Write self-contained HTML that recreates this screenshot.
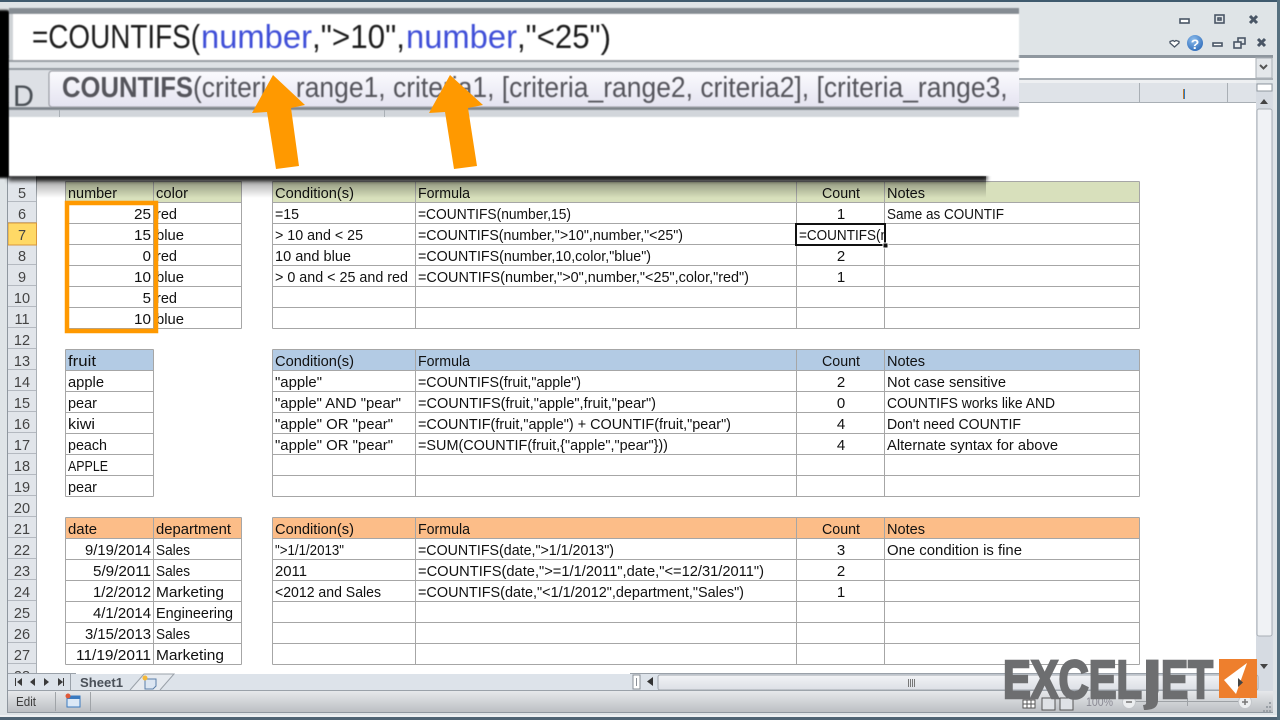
<!DOCTYPE html>
<html><head><meta charset="utf-8"><style>
html,body{margin:0;padding:0;background:#dfe4e7;width:1280px;height:720px;overflow:hidden}
svg{display:block}
text{font-family:"Liberation Sans",sans-serif;font-size:15px;fill:#111;white-space:pre}
.r{text-anchor:end}.c{text-anchor:middle}
.rh{text-anchor:middle;fill:#444;font-size:14.5px}
.z{font-size:33px;fill:#1e1e1e}
.zb{font-size:33px;fill:#3f4fd8}
.tip{font-size:29px;fill:#55555c}
.lg{font-size:54px;font-weight:bold;fill:#6d6e70;stroke:#6d6e70;stroke-width:2.500}
</style></head><body>
<svg width="1280" height="720" viewBox="0 0 1280 720" xmlns="http://www.w3.org/2000/svg">
<defs>
<linearGradient id="st" x1="0" y1="0" x2="0" y2="1"><stop offset="0" stop-color="#e6e8eb"/><stop offset="1" stop-color="#bcbfc3"/></linearGradient>
<linearGradient id="sc" x1="0" y1="0" x2="0" y2="1"><stop offset="0" stop-color="#f2f3f6"/><stop offset="1" stop-color="#dcdfe5"/></linearGradient>
<linearGradient id="tp" x1="0" y1="0" x2="0" y2="1"><stop offset="0" stop-color="#fbfbfe"/><stop offset="1" stop-color="#e4e3f0"/></linearGradient>
<linearGradient id="ps" x1="0" y1="0" x2="0" y2="1"><stop offset="0" stop-color="#000" stop-opacity=".7"/><stop offset=".3" stop-color="#000" stop-opacity=".3"/><stop offset="1" stop-color="#000" stop-opacity="0"/></linearGradient>
<radialGradient id="q" cx=".4" cy=".3" r=".8"><stop offset="0" stop-color="#8cbcec"/><stop offset="1" stop-color="#2a68b8"/></radialGradient>
<filter id="b"><feGaussianBlur stdDeviation=".55"/></filter>
<filter id="bs" x="-20%" y="-200%" width="140%" height="500%"><feGaussianBlur stdDeviation="2"/></filter>
<filter id="bl" x="-100%" y="-5%" width="300%" height="110%"><feGaussianBlur stdDeviation="1"/></filter>
<clipPath id="jc"><rect x="1146" y="650" width="12.500" height="50"/></clipPath>
</defs>

<!-- window -->
<rect width="1280" height="720" fill="#dfe4e7"/>
<rect x="0" y="0" width="1280" height="2" fill="#3f5a6e"/>
<rect x="0" y="717" width="1280" height="3" fill="#4f6474"/>
<rect x="0" y="715" width="1280" height="2" fill="#eef0f2"/>
<rect x="1277" y="0" width="3" height="720" fill="#56707f"/>

<!-- window controls -->
<g fill="none" stroke="#4a5666" stroke-width="1.6">
<rect x="1180" y="19" width="9" height="4" fill="#fff"/>
<rect x="1215" y="15" width="9" height="8"/><rect x="1218" y="18" width="3" height="2"/>
<path d="M1250 16l7 7m0-7l-7 7" stroke-width="3"/>
<rect x="1213" y="43" width="9" height="3" fill="#fff"/>
<rect x="1238" y="38" width="7" height="6"/><rect x="1234" y="42" width="7" height="6" fill="#e6e9ec"/>
<path d="M1258 39l7 7m0-7l-7 7" stroke-width="3"/>
<path d="M1170 41.500l3 -1 l1.500 1 l1.500-1 l3 1 v1.500 l-4.500 4 l-4.500-4z" stroke-width="1.300" fill="#fff"/>
</g>
<circle cx="1195" cy="43" r="8" fill="url(#q)"/>
<text x="1195" y="49" class="c" style="font-size:14px;font-weight:bold;fill:#fff">?</text>

<!-- formula bar -->
<rect x="8" y="55" width="1265" height="3" fill="#8f979f"/>
<rect x="8" y="58" width="1248" height="20" fill="#fff"/>
<rect x="1256" y="58" width="16" height="20" fill="#e4e7ea" stroke="#a9afb5"/>
<path d="M1260 65l3.500 3.500 3.500-3.500" fill="none" stroke="#555" stroke-width="2"/>
<rect x="8" y="78" width="1265" height="2" fill="#a9afb5"/>
<rect x="8" y="80" width="1248" height="3" fill="#eef0f2"/>

<!-- column headers -->
<rect x="8" y="83" width="1248" height="20" fill="#dfe3e8"/>
<path d="M8 102.500H1256M1139.500 83V103M1227.500 83V103" stroke="#a9afb5"/>
<rect x="1183" y="89" width="1" height="10" fill="#c47a2c"/><rect x="1184" y="89" width="1" height="10" fill="#2a7ac8"/>

<!-- sheet -->
<rect x="36" y="103" width="1220" height="571" fill="#fff"/>

<!-- vertical scrollbar -->
<rect x="1256" y="83" width="17" height="608" fill="#d6dbe2"/>
<rect x="1257" y="84" width="15" height="7" fill="#fff" stroke="#8f979f"/>
<path d="M1260 104h8l-4-5z" fill="#444"/>
<rect x="1257" y="109" width="15" height="527" rx="2" fill="#f0f2f5" stroke="#a9afb5"/>
<path d="M1260 664h8l-4 5z" fill="#444"/>

<!-- row header -->
<rect x="8" y="103" width="28" height="571" fill="#e1e5ea"/>
<path d="M36.500 103V674" stroke="#a9afb5"/>
<path d="M8 201.500H36M8 222.500H36M8 243.500H36M8 264.500H36M8 285.500H36M8 306.500H36M8 327.500H36M8 348.500H36M8 369.500H36M8 390.500H36M8 411.500H36M8 432.500H36M8 453.500H36M8 474.500H36M8 495.500H36M8 516.500H36M8 537.500H36M8 558.500H36M8 579.500H36M8 600.500H36M8 621.500H36M8 642.500H36M8 663.500H36" stroke="#b4b9c0"/>
<rect x="8" y="223" width="28.500" height="22" fill="#ffd966" stroke="#d8963c"/>
<rect x="0" y="2" width="8" height="713" fill="#dfe4e7"/>
<rect x="7" y="103" width="1" height="610" fill="#8f979f"/>

<g>
<text x="22" y="198" class="rh">5</text><text x="22" y="219" class="rh">6</text><text x="22" y="240" class="rh">7</text><text x="22" y="261" class="rh">8</text><text x="22" y="282" class="rh">9</text><text x="22" y="303" class="rh">10</text><text x="22" y="324" class="rh">11</text><text x="22" y="345" class="rh">12</text><text x="22" y="366" class="rh">13</text><text x="22" y="387" class="rh">14</text><text x="22" y="408" class="rh">15</text><text x="22" y="429" class="rh">16</text><text x="22" y="450" class="rh">17</text><text x="22" y="471" class="rh">18</text><text x="22" y="492" class="rh">19</text><text x="22" y="513" class="rh">20</text><text x="22" y="534" class="rh">21</text><text x="22" y="555" class="rh">22</text><text x="22" y="576" class="rh">23</text><text x="22" y="597" class="rh">24</text><text x="22" y="618" class="rh">25</text><text x="22" y="639" class="rh">26</text><text x="22" y="660" class="rh">27</text>
</g>
<svg x="8" y="664" width="28" height="10"><text x="14" y="17" class="rh">28</text></svg>

<!-- header fills -->
<g fill="#d8e0bc"><rect x="66" y="182" width="175" height="20"/><rect x="273" y="182" width="866" height="20"/></g>
<g fill="#b3cbe4"><rect x="66" y="350" width="87" height="20"/><rect x="273" y="350" width="866" height="20"/></g>
<g fill="#fcbd88"><rect x="66" y="518" width="175" height="20"/><rect x="273" y="518" width="866" height="20"/></g>

<!-- grid -->
<g stroke="#a6a6a6" fill="none">
<path d="M65.500 181.500H241.500M65.500 202.500H241.500M65.500 223.500H241.500M65.500 244.500H241.500M65.500 265.500H241.500M65.500 286.500H241.500M65.500 307.500H241.500M65.500 328.500H241.500M65.500 181.500V328.500M153.500 181.500V328.500M241.500 181.500V328.500"/>
<path d="M272.500 181.500H1139.500M272.500 202.500H1139.500M272.500 223.500H1139.500M272.500 244.500H1139.500M272.500 265.500H1139.500M272.500 286.500H1139.500M272.500 307.500H1139.500M272.500 328.500H1139.500M272.500 181.500V328.500M415.500 181.500V328.500M796.500 181.500V328.500M884.500 181.500V328.500M1139.500 181.500V328.500"/>
<path d="M65.500 349.500H153.500M65.500 370.500H153.500M65.500 391.500H153.500M65.500 412.500H153.500M65.500 433.500H153.500M65.500 454.500H153.500M65.500 475.500H153.500M65.500 496.500H153.500M65.500 349.500V496.500M153.500 349.500V496.500"/>
<path d="M272.500 349.500H1139.500M272.500 370.500H1139.500M272.500 391.500H1139.500M272.500 412.500H1139.500M272.500 433.500H1139.500M272.500 454.500H1139.500M272.500 475.500H1139.500M272.500 496.500H1139.500M272.500 349.500V496.500M415.500 349.500V496.500M796.500 349.500V496.500M884.500 349.500V496.500M1139.500 349.500V496.500"/>
<path d="M65.500 517.500H241.500M65.500 538.500H241.500M65.500 559.500H241.500M65.500 580.500H241.500M65.500 601.500H241.500M65.500 622.500H241.500M65.500 643.500H241.500M65.500 664.500H241.500M65.500 517.500V664.500M153.500 517.500V664.500M241.500 517.500V664.500"/>
<path d="M272.500 517.500H1139.500M272.500 538.500H1139.500M272.500 559.500H1139.500M272.500 580.500H1139.500M272.500 601.500H1139.500M272.500 622.500H1139.500M272.500 643.500H1139.500M272.500 664.500H1139.500M272.500 517.500V664.500M415.500 517.500V664.500M796.500 517.500V664.500M884.500 517.500V664.500M1139.500 517.500V664.500"/>
</g>

<!-- text -->
<g>
<text x="68" y="198" textLength="49" lengthAdjust="spacingAndGlyphs">number</text>
<text x="156" y="198" textLength="32" lengthAdjust="spacingAndGlyphs">color</text>
<text x="275" y="198" textLength="79" lengthAdjust="spacingAndGlyphs">Condition(s)</text>
<text x="418" y="198" textLength="52" lengthAdjust="spacingAndGlyphs">Formula</text>
<text x="841" y="198" class="c" textLength="38" lengthAdjust="spacingAndGlyphs">Count</text>
<text x="887" y="198" textLength="38" lengthAdjust="spacingAndGlyphs">Notes</text>

<text x="151" y="219" class="r" textLength="17" lengthAdjust="spacingAndGlyphs">25</text>
<text x="156" y="219" textLength="21" lengthAdjust="spacingAndGlyphs">red</text>
<text x="275" y="219" textLength="24" lengthAdjust="spacingAndGlyphs">=15</text>
<text x="418" y="219" textLength="153" lengthAdjust="spacingAndGlyphs">=COUNTIFS(number,15)</text>
<text x="841" y="219" class="c">1</text>
<text x="887" y="219" textLength="117" lengthAdjust="spacingAndGlyphs">Same as COUNTIF</text>

<text x="151" y="240" class="r" textLength="17" lengthAdjust="spacingAndGlyphs">15</text>
<text x="156" y="240" textLength="28" lengthAdjust="spacingAndGlyphs">blue</text>
<text x="275" y="240" textLength="88" lengthAdjust="spacingAndGlyphs">&gt; 10 and &lt; 25</text>
<text x="418" y="240" textLength="265" lengthAdjust="spacingAndGlyphs">=COUNTIFS(number,"&gt;10",number,"&lt;25")</text>

<text x="151" y="261" class="r">0</text>
<text x="156" y="261" textLength="21" lengthAdjust="spacingAndGlyphs">red</text>
<text x="275" y="261" textLength="76" lengthAdjust="spacingAndGlyphs">10 and blue</text>
<text x="418" y="261" textLength="233" lengthAdjust="spacingAndGlyphs">=COUNTIFS(number,10,color,"blue")</text>
<text x="841" y="261" class="c">2</text>

<text x="151" y="282" class="r" textLength="17" lengthAdjust="spacingAndGlyphs">10</text>
<text x="156" y="282" textLength="28" lengthAdjust="spacingAndGlyphs">blue</text>
<text x="275" y="282" textLength="133" lengthAdjust="spacingAndGlyphs">&gt; 0 and &lt; 25 and red</text>
<text x="418" y="282" textLength="331" lengthAdjust="spacingAndGlyphs">=COUNTIFS(number,"&gt;0",number,"&lt;25",color,"red")</text>
<text x="841" y="282" class="c">1</text>

<text x="151" y="303" class="r">5</text>
<text x="156" y="303" textLength="21" lengthAdjust="spacingAndGlyphs">red</text>
<text x="151" y="324" class="r" textLength="17" lengthAdjust="spacingAndGlyphs">10</text>
<text x="156" y="324" textLength="28" lengthAdjust="spacingAndGlyphs">blue</text>

<text x="68" y="366" textLength="28" lengthAdjust="spacingAndGlyphs">fruit</text>
<text x="275" y="366" textLength="79" lengthAdjust="spacingAndGlyphs">Condition(s)</text>
<text x="418" y="366" textLength="52" lengthAdjust="spacingAndGlyphs">Formula</text>
<text x="841" y="366" class="c" textLength="38" lengthAdjust="spacingAndGlyphs">Count</text>
<text x="887" y="366" textLength="38" lengthAdjust="spacingAndGlyphs">Notes</text>

<text x="68" y="387" textLength="36" lengthAdjust="spacingAndGlyphs">apple</text>
<text x="275" y="387" textLength="47" lengthAdjust="spacingAndGlyphs">"apple"</text>
<text x="418" y="387" textLength="163" lengthAdjust="spacingAndGlyphs">=COUNTIFS(fruit,"apple")</text>
<text x="841" y="387" class="c">2</text>
<text x="887" y="387" textLength="119" lengthAdjust="spacingAndGlyphs">Not case sensitive</text>

<text x="68" y="408" textLength="29" lengthAdjust="spacingAndGlyphs">pear</text>
<text x="275" y="408" textLength="126" lengthAdjust="spacingAndGlyphs">"apple" AND "pear"</text>
<text x="418" y="408" textLength="238" lengthAdjust="spacingAndGlyphs">=COUNTIFS(fruit,"apple",fruit,"pear")</text>
<text x="841" y="408" class="c">0</text>
<text x="887" y="408" textLength="168" lengthAdjust="spacingAndGlyphs">COUNTIFS works like AND</text>

<text x="68" y="429" textLength="27" lengthAdjust="spacingAndGlyphs">kiwi</text>
<text x="275" y="429" textLength="118" lengthAdjust="spacingAndGlyphs">"apple" OR "pear"</text>
<text x="418" y="429" textLength="313" lengthAdjust="spacingAndGlyphs">=COUNTIF(fruit,"apple") + COUNTIF(fruit,"pear")</text>
<text x="841" y="429" class="c">4</text>
<text x="887" y="429" textLength="134" lengthAdjust="spacingAndGlyphs">Don't need COUNTIF</text>

<text x="68" y="450" textLength="39" lengthAdjust="spacingAndGlyphs">peach</text>
<text x="275" y="450" textLength="118" lengthAdjust="spacingAndGlyphs">"apple" OR "pear"</text>
<text x="418" y="450" textLength="250" lengthAdjust="spacingAndGlyphs">=SUM(COUNTIF(fruit,{"apple","pear"}))</text>
<text x="841" y="450" class="c">4</text>
<text x="887" y="450" textLength="171" lengthAdjust="spacingAndGlyphs">Alternate syntax for above</text>

<text x="68" y="471" textLength="40" lengthAdjust="spacingAndGlyphs">APPLE</text>
<text x="68" y="492" textLength="29" lengthAdjust="spacingAndGlyphs">pear</text>

<text x="68" y="534" textLength="29" lengthAdjust="spacingAndGlyphs">date</text>
<text x="156" y="534" textLength="75" lengthAdjust="spacingAndGlyphs">department</text>
<text x="275" y="534" textLength="79" lengthAdjust="spacingAndGlyphs">Condition(s)</text>
<text x="418" y="534" textLength="52" lengthAdjust="spacingAndGlyphs">Formula</text>
<text x="841" y="534" class="c" textLength="38" lengthAdjust="spacingAndGlyphs">Count</text>
<text x="887" y="534" textLength="38" lengthAdjust="spacingAndGlyphs">Notes</text>

<text x="151" y="555" class="r" textLength="66" lengthAdjust="spacingAndGlyphs">9/19/2014</text>
<text x="156" y="555" textLength="34" lengthAdjust="spacingAndGlyphs">Sales</text>
<text x="275" y="555" textLength="69" lengthAdjust="spacingAndGlyphs">"&gt;1/1/2013"</text>
<text x="418" y="555" textLength="196" lengthAdjust="spacingAndGlyphs">=COUNTIFS(date,"&gt;1/1/2013")</text>
<text x="841" y="555" class="c">3</text>
<text x="887" y="555" textLength="135" lengthAdjust="spacingAndGlyphs">One condition is fine</text>

<text x="151" y="576" class="r" textLength="58" lengthAdjust="spacingAndGlyphs">5/9/2011</text>
<text x="156" y="576" textLength="34" lengthAdjust="spacingAndGlyphs">Sales</text>
<text x="275" y="576" textLength="32" lengthAdjust="spacingAndGlyphs">2011</text>
<text x="418" y="576" textLength="346" lengthAdjust="spacingAndGlyphs">=COUNTIFS(date,"&gt;=1/1/2011",date,"&lt;=12/31/2011")</text>
<text x="841" y="576" class="c">2</text>

<text x="151" y="597" class="r" textLength="58" lengthAdjust="spacingAndGlyphs">1/2/2012</text>
<text x="156" y="597" textLength="68" lengthAdjust="spacingAndGlyphs">Marketing</text>
<text x="275" y="597" textLength="106" lengthAdjust="spacingAndGlyphs">&lt;2012 and Sales</text>
<text x="418" y="597" textLength="326" lengthAdjust="spacingAndGlyphs">=COUNTIFS(date,"&lt;1/1/2012",department,"Sales")</text>
<text x="841" y="597" class="c">1</text>

<text x="151" y="618" class="r" textLength="58" lengthAdjust="spacingAndGlyphs">4/1/2014</text>
<text x="156" y="618" textLength="77" lengthAdjust="spacingAndGlyphs">Engineering</text>
<text x="151" y="639" class="r" textLength="66" lengthAdjust="spacingAndGlyphs">3/15/2013</text>
<text x="156" y="639" textLength="34" lengthAdjust="spacingAndGlyphs">Sales</text>
<text x="151" y="660" class="r" textLength="75" lengthAdjust="spacingAndGlyphs">11/19/2011</text>
<text x="156" y="660" textLength="68" lengthAdjust="spacingAndGlyphs">Marketing</text>
</g>

<!-- active cell -->
<svg x="797" y="225" width="87" height="20"><text x="2" y="15" textLength="89" lengthAdjust="spacingAndGlyphs">=COUNTIFS(n</text></svg>
<rect x="796" y="224" width="89" height="21" fill="none" stroke="#111" stroke-width="2"/>
<rect x="883" y="243" width="5" height="5" fill="#111" stroke="#fff"/>

<!-- orange highlight -->
<rect x="67" y="203" width="89" height="128" fill="none" stroke="#ff9900" stroke-width="4.500"/>

<!-- sheet tabs -->
<rect x="8" y="674" width="1249" height="17" fill="#dde3ea"/>
<path d="M8 673.500H76M630 673.500H1257M8 690.500H1257" stroke="#9aa1a9"/>
<path d="M70.500 674V690" stroke="#9aa1a9"/>
<g fill="#3a3a3a">
<path d="M15 678h1v8h-1zM22 678v8l-5-4z"/><path d="M35 678v8l-5-4z"/><path d="M44 678v8l5-4z"/><path d="M58 678v8l5-4zM63 678h1v8h-1z"/>
</g>
<text x="80" y="687" style="font-weight:bold;font-size:13px;fill:#4a5058" textLength="43" lengthAdjust="spacingAndGlyphs">Sheet1</text>
<path d="M130 690l14-16h30l-14 16" fill="#e6eaef" stroke="#9aa1a9"/>
<path d="M145 679h11v7l-3 3h-8z" fill="#dce6f2" stroke="#5a7ea8"/>
<circle cx="145" cy="678" r="2.500" fill="#f5b93a"/>

<!-- hscroll -->
<rect x="633" y="675" width="7" height="14" fill="#fff" stroke="#8a9098"/>
<rect x="636" y="678" width="1" height="8" fill="#8a9098"/>
<path d="M653 677v9l-6-4.500z" fill="#333"/>
<rect x="658" y="675" width="600" height="15" rx="2" fill="url(#sc)" stroke="#a0a6ad"/>
<path d="M908.500 679v8M910.500 679v8M912.500 679v8M914.500 679v8" stroke="#777"/>

<!-- status bar -->
<rect x="8" y="691" width="1265" height="21" fill="url(#st)"/>
<rect x="8" y="712" width="1265" height="1" fill="#8f979f"/>
<path d="M55.500 692V711M90.500 692V711" stroke="#a0a4a8"/>
<text x="16" y="706" style="font-size:12.500px;fill:#3c3c3c" textLength="20" lengthAdjust="spacingAndGlyphs">Edit</text>
<rect x="67" y="696" width="13" height="11" fill="#dbe8f6" stroke="#3a7ac0"/>
<rect x="67" y="696" width="13" height="3" fill="#3a7ac0"/>
<circle cx="68" cy="696" r="2.500" fill="#e05a3a"/>
<path d="M1023 700h12v8h-12zM1023 704h12M1027 700v8M1031 700v8" fill="#fff" stroke="#555"/>
<rect x="1042" y="698" width="13" height="12" fill="#dfe2e6" stroke="#555"/>
<rect x="1060" y="698" width="13" height="12" fill="#dfe2e6" stroke="#555"/>
<text x="1086" y="706" style="font-size:12px;fill:#8a8a94" textLength="27" lengthAdjust="spacingAndGlyphs">100%</text>
<circle cx="1129" cy="702" r="6.500" fill="#eceef0" stroke="#c4c7cb"/>
<path d="M1126 702h6" stroke="#777" stroke-width="1.500"/>
<path d="M1136 701.500h103M1187.500 698v8" stroke="#9ea2a6"/>
<circle cx="1245" cy="702" r="6.500" fill="#eceef0" stroke="#c4c7cb"/>
<path d="M1242 702h6M1245 699v6" stroke="#777" stroke-width="1.500"/>
<g fill="#9aa0a6"><rect x="1269" y="702" width="2" height="2"/><rect x="1266" y="706" width="2" height="2"/><rect x="1269" y="706" width="2" height="2"/><rect x="1263" y="710" width="2" height="2"/><rect x="1266" y="710" width="2" height="2"/><rect x="1269" y="710" width="2" height="2"/></g>

<!-- zoom panel shadow -->
<rect x="36" y="176" width="950" height="22" fill="url(#ps)"/>
<rect x="8" y="173" width="979" height="8" fill="#000" opacity=".75" filter="url(#bs)"/>
<rect x="-6" y="10" width="16" height="168" rx="3" fill="#000" filter="url(#bl)"/>

<!-- zoom panel -->
<g filter="url(#b)">
<rect x="9" y="8" width="1010" height="168" fill="#fff"/>
<rect x="9" y="8" width="1010" height="6" fill="#858c93"/>
<rect x="9" y="14" width="4" height="46" fill="#cfd3d6"/>
<rect x="9" y="60" width="1010" height="2" fill="#949aa0"/>
<rect x="9" y="62" width="1010" height="6" fill="#dde1e5"/>
<rect x="9" y="68" width="1010" height="2" fill="#8f959b"/>
<rect x="9" y="70" width="1010" height="47" fill="#dde0e5"/>
<rect x="9" y="107" width="1010" height="3" fill="#7e858c"/>
<rect x="9" y="110" width="1010" height="7" fill="#d2d6db"/>
<rect x="9" y="117" width="1010" height="58" fill="#fff"/>
</g>
<path d="M1019 71H52a3 3 0 0 0-3 3V104a3 3 0 0 0 3 3H1019Z" fill="url(#tp)" stroke="none"/>
<path d="M1018 71H52a3 3 0 0 0-3 3V104a3 3 0 0 0 3 3H1018" fill="none" stroke="#8f9299" filter="url(#b)"/>
<rect x="59" y="110" width="1" height="7" fill="#aab0b6"/><rect x="384" y="110" width="1" height="7" fill="#aab0b6"/>

<g filter="url(#b)">
<text x="32" y="48" class="z" textLength="168" lengthAdjust="spacingAndGlyphs">=COUNTIFS(</text>
<text x="201" y="48" class="zb" textLength="111" lengthAdjust="spacingAndGlyphs">number</text>
<text x="312" y="48" class="z" textLength="93" lengthAdjust="spacingAndGlyphs">,"&gt;10",</text>
<text x="406" y="48" class="zb" textLength="111" lengthAdjust="spacingAndGlyphs">number</text>
<text x="517" y="48" class="z" textLength="94" lengthAdjust="spacingAndGlyphs">,"&lt;25")</text>
<text x="13" y="106" style="font-size:30px;fill:#4a4f55" textLength="21" lengthAdjust="spacingAndGlyphs">D</text>
<text x="62" y="97" class="tip" style="font-weight:bold" textLength="131" lengthAdjust="spacingAndGlyphs">COUNTIFS</text>
<text x="193" y="97" class="tip" textLength="822" lengthAdjust="spacingAndGlyphs">(criteria_range1, criteria1, [criteria_range2, criteria2], [criteria_range3, </text>
</g>

<!-- arrows -->
<path d="M273 75L252 113L267 112L276 169L299 166L291 108L305 105Z" fill="#ff9900"/>
<path d="M450 75L429 113L445 112L454 169L477 166L468 108L483 105Z" fill="#ff9900"/>

<!-- logo -->
<text x="1003" y="698" class="lg" textLength="139" lengthAdjust="spacingAndGlyphs">EXCEL</text>
<g clip-path="url(#jc)"><text x="1116" y="698" class="lg" textLength="48" lengthAdjust="spacingAndGlyphs">J</text></g>
<text x="1161" y="698" class="lg" textLength="52" lengthAdjust="spacingAndGlyphs">ET</text>
<path d="M1146 690h12v10c0 7-4 10-14 10l-1-5c4 0 3-2 3-5z" fill="#6d6e70"/>
<rect x="1219" y="659" width="38" height="39" fill="#ee7f2d"/>
<path d="M1247 663L1224 680L1236 694Z" fill="#fff"/>
<path d="M1238 678v9l5-4.500z" fill="#444"/>
</svg>
</body></html>
